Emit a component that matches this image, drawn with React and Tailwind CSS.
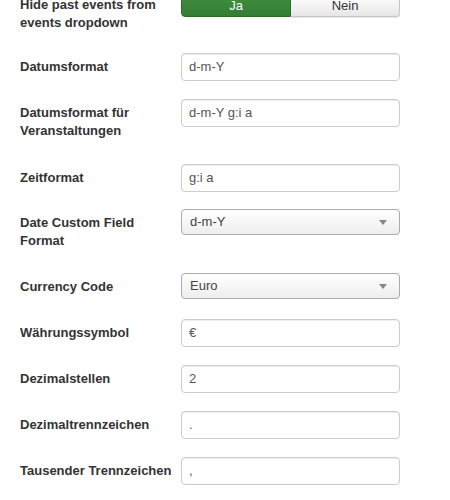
const rows = [
  { label: ['Datumsformat'], value: 'd-m-Y', h: 'h-[46px]' },
  { label: ['Datumsformat für', 'Veranstaltungen'], value: 'd-m-Y g:i a', h: 'h-[65px]' },
  { label: ['Zeitformat'], value: 'g:i a', h: 'h-[45px]' },
  { label: ['Date Custom Field', 'Format'], value: 'd-m-Y', select: true, h: 'h-[64px]' },
  { label: ['Currency Code'], value: 'Euro', select: true, h: 'h-[46px]' },
  { label: ['Währungssymbol'], value: '€', h: 'h-[46px]' },
  { label: ['Dezimalstellen'], value: '2', h: 'h-[46px]' },
  { label: ['Dezimaltrennzeichen'], value: '.', h: 'h-[46px]' },
  { label: ['Tausender Trennzeichen'], value: ',', h: 'h-[46px]' },
];

function Label({ lines }) {
  return (
    <div className="w-[161px] shrink-0 pt-[5px] text-[13px] font-bold leading-[18px] text-[#333]">
      {lines.map((l) => (
        <div key={l} className="whitespace-nowrap">{l}</div>
      ))}
    </div>
  );
}

function TextInput({ value }) {
  return (
    <div className="flex h-[28px] w-[219px] items-center rounded-[4px] border border-[#cccccc] bg-white px-[7px] text-[13px] text-[#555] shadow-[inset_0_1px_1px_rgba(0,0,0,0.075)]">
      {value}
    </div>
  );
}

function Select({ value }) {
  return (
    <div className="flex h-[26px] w-[219px] items-center justify-between rounded-[4px] border border-[#aaaaaa] bg-gradient-to-b from-white to-[#eeeeee] pl-[8px] pr-[12px] text-[13px] text-[#444]">
      <span>{value}</span>
      <svg width="8" height="5" viewBox="0 0 8 5">
        <path d="M0 0 L8 0 L4 5 Z" fill="#888" />
      </svg>
    </div>
  );
}

export default function App() {
  return (
    <div className="h-[500px] overflow-hidden bg-white font-['Liberation_Sans',Arial,sans-serif]">
      <div className="mt-[-9px] pl-[20px]">
        <div className="flex h-[62px] items-start">
          <Label lines={['Hide past events from', 'events dropdown']} />
          <div className="mt-[4px] flex h-[22px] w-[219px] text-[13px]">
            <div className="flex w-[110px] items-center justify-center rounded-l-[4px] border border-[#2b6b2b] bg-gradient-to-b from-[#3f8f3f] to-[#347c34] text-white">
              Ja
            </div>
            <div className="flex flex-1 items-center justify-center rounded-r-[4px] border border-l-0 border-[#c5c5c5] bg-gradient-to-b from-white to-[#e6e6e6] text-[#333] shadow-[0_1px_1px_rgba(0,0,0,0.1)]">
              Nein
            </div>
          </div>
        </div>
        {rows.map((r) => (
          <div key={r.label[0]} className={`flex items-start ${r.h}`}>
            <Label lines={r.label} />
            {r.select ? <Select value={r.value} /> : <TextInput value={r.value} />}
          </div>
        ))}
      </div>
    </div>
  );
}
